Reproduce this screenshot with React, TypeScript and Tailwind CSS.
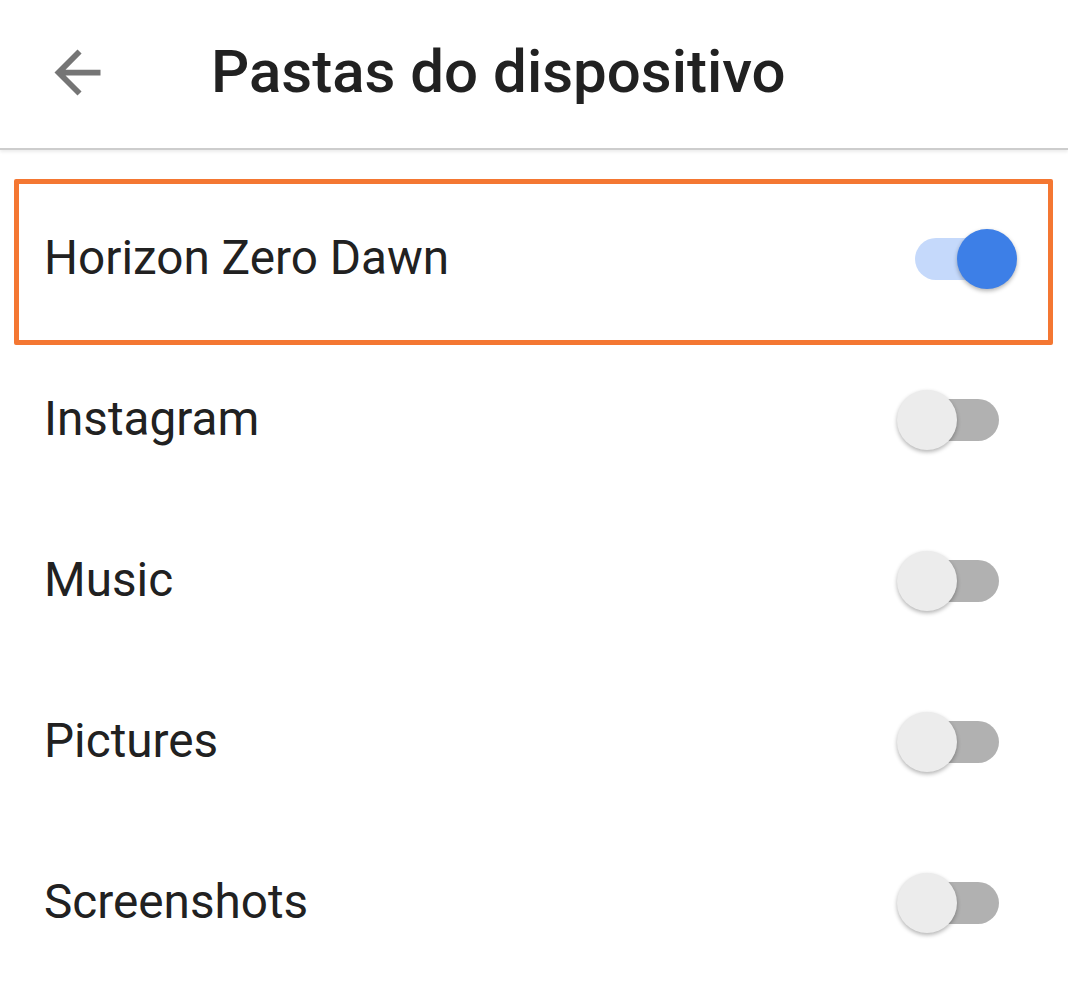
import React from "react";

const items = [
  { name: "Horizon Zero Dawn", on: true },
  { name: "Instagram", on: false },
  { name: "Music", on: false },
  { name: "Pictures", on: false },
  { name: "Screenshots", on: false },
];

function Toggle({ on }: { on: boolean }) {
  return (
    <div className="flex items-center px-[18px] shrink-0">
      <div
        className={
          on
            ? "flex items-center justify-end w-[84px] h-[42px] rounded-full bg-[#c5d9fb]"
            : "flex items-center justify-start w-[84px] h-[42px] rounded-full bg-[#b1b1b1]"
        }
      >
        <div
          className={
            on
              ? "w-[60px] h-[60px] shrink-0 -mr-[18px] rounded-full bg-[#3d7fe7] shadow-[0_2px_4px_rgba(0,0,0,0.3)]"
              : "w-[60px] h-[60px] shrink-0 -ml-[18px] rounded-full bg-[#ececec] shadow-[0_2px_4px_rgba(0,0,0,0.3)]"
          }
        />
      </div>
    </div>
  );
}

export default function App() {
  return (
    <div
      className="w-[1068px] h-[994px] bg-white overflow-hidden"
      style={{ fontFamily: "Roboto, 'Noto Sans', sans-serif" }}
    >
      <div className="relative z-10 h-[150px] flex items-center border-b-2 border-[#cdcdcd] bg-white shadow-[0_2px_3px_rgba(0,0,0,0.08)]">
        <svg
          className="ml-[43px] w-[69px] h-[69px] shrink-0 -mt-[4px]"
          viewBox="0 0 24 24"
          fill="#757575"
        >
          <path d="M20 11H7.83l5.59-5.59L12 4l-8 8 8 8 1.41-1.41L7.83 13H20v-2z" />
        </svg>
        <div className="ml-[99px] text-[60px] leading-none font-medium text-[#212121] -mt-[5px]">
          Pastas do dispositivo
        </div>
      </div>
      <div className="flex flex-col pt-[28px]">
        {items.map((it, i) => (
          <div
            key={it.name}
            className="relative h-[161px] flex items-center justify-between pl-[44px] pr-[51px]"
          >
            <div className="text-[47.7px] leading-none text-[#212121]">{it.name}</div>
            <Toggle on={it.on} />
            {i === 0 && (
              <div className="absolute left-[14px] right-[15px] top-[1px] -bottom-[6px] border-[5px] border-[#f47732] rounded-[2px] pointer-events-none" />
            )}
          </div>
        ))}
      </div>
    </div>
  );
}
